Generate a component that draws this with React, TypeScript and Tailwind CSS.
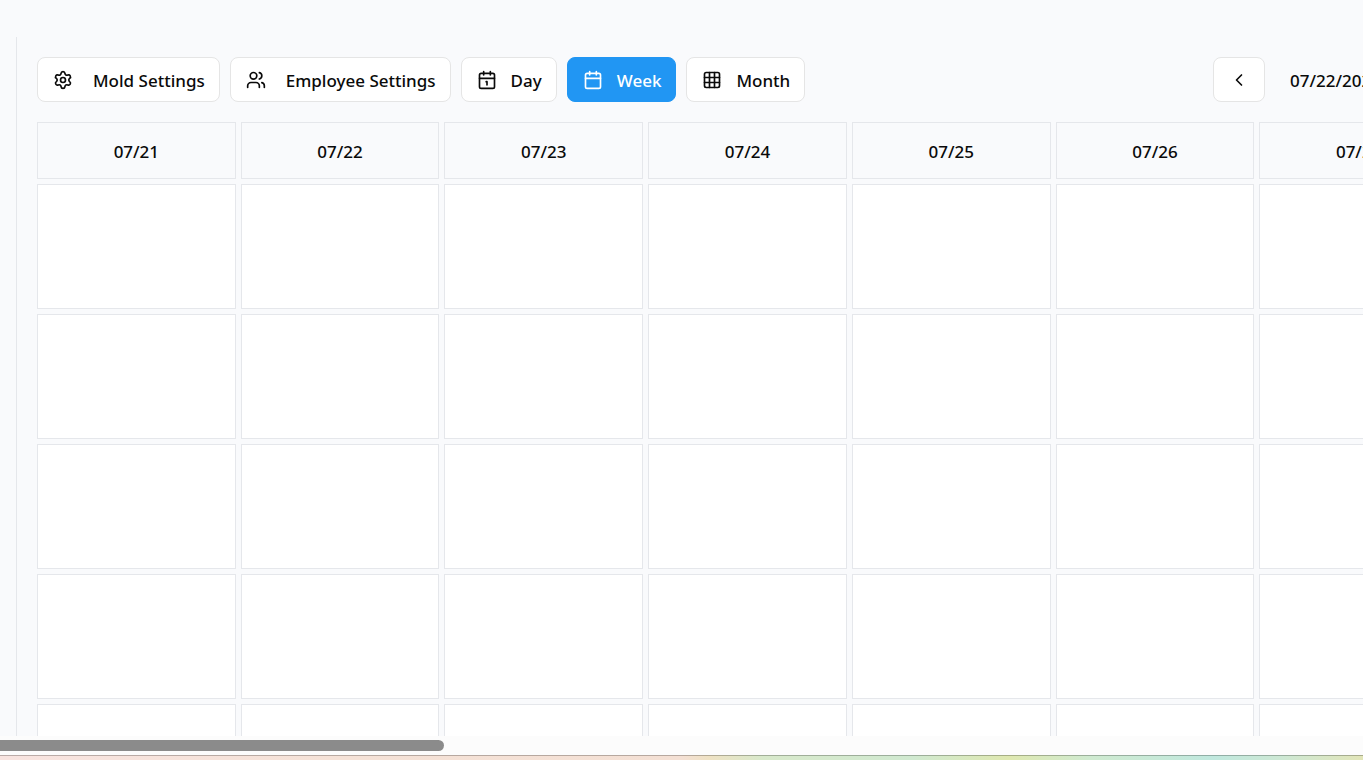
import { useState } from "react";
import type { ReactNode } from "react";
import { Calendar, Calendar1, ChevronLeft, ChevronRight, Grid3x3, Settings, Users } from "lucide-react";
import clsx from "clsx";

const days = ["07/21", "07/22", "07/23", "07/24", "07/25", "07/26", "07/27"];
const rows = [0, 1, 2, 3, 4, 5];

type ToolbarButtonProps = {
  icon: ReactNode;
  label: string;
  wide?: boolean;
  active?: boolean;
  onClick?: () => void;
};

function ToolbarButton({ icon, label, wide, active, onClick }: ToolbarButtonProps) {
  return (
    <button
      type="button"
      onClick={onClick}
      className={clsx(
        "flex h-[45px] shrink-0 items-center whitespace-nowrap rounded-[8px] border pl-[15px] pr-[14px]",
        wide ? "gap-5" : "gap-[14px]",
        active ? "border-[#2196f3] bg-[#2196f3] text-white" : "border-[#e5e5e5] bg-white text-[#0a0a0a]",
      )}
    >
      {icon}
      <span className="pt-px">{label}</span>
    </button>
  );
}

export default function App() {
  const [view, setView] = useState("Week");

  return (
    <div className="flex h-screen flex-col overflow-hidden bg-[#f9fafc] font-['Noto_Sans','Open_Sans',sans-serif] text-[17px] font-medium leading-[25px] text-[#0a0a0a]">
      <div className="min-h-0 flex-1 overflow-hidden pl-4 pt-[37px]">
        <main className="w-max border-l border-[#e5e7eb] p-5">
          <header className="flex items-center justify-between pb-5">
            <div className="flex gap-[10px]">
              <ToolbarButton wide icon={<Settings size={20} />} label="Mold Settings" />
              <ToolbarButton wide icon={<Users size={20} />} label="Employee Settings" />
              <ToolbarButton icon={<Calendar1 size={20} />} label="Day" active={view === "Day"} onClick={() => setView("Day")} />
              <ToolbarButton icon={<Calendar size={20} />} label="Week" active={view === "Week"} onClick={() => setView("Week")} />
              <ToolbarButton icon={<Grid3x3 size={20} />} label="Month" active={view === "Month"} onClick={() => setView("Month")} />
            </div>
            <div className="flex items-center gap-[25px]">
              <button type="button" aria-label="Previous week" className="flex h-[45px] w-[52px] items-center justify-center rounded-[8px] border border-[#e5e5e5] bg-white">
                <ChevronLeft size={20} />
              </button>
              <span className="pt-px">07/22/2025</span>
              <button type="button" aria-label="Next week" className="flex h-[45px] w-[52px] items-center justify-center rounded-[8px] border border-[#e5e5e5] bg-white">
                <ChevronRight size={20} />
              </button>
            </div>
          </header>
          <div className="grid min-w-[1421px] grid-cols-7 gap-[5px]">
            {days.map((day) => (
              <div key={day} className="flex h-[57px] items-center justify-center border border-[#e5e7eb] pt-px">
                {day}
              </div>
            ))}
            {rows.map((row) =>
              days.map((day) => <div key={`${day}-${row}`} className="h-[125px] border border-[#e5e7eb] bg-white" />),
            )}
          </div>
        </main>
      </div>
      <div className="flex h-[19px] shrink-0 items-center bg-[#fcfcfc]">
        <div className="h-[11px] w-[444px] rounded-r-full bg-[#8b8b8b]" />
      </div>
      <div className="h-[5px] shrink-0 border-t border-black/25 bg-[linear-gradient(90deg,#f8e4e0_0%,#f5e2d7_25%,#f4e0d4_50%,#efe2c4_52%,#d8e9cb_56%,#d0e9d0_67%,#dfe8b0_74%,#cfead0_80%,#c0e8de_89%,#cde8d4_94%,#e2e5b8_100%)]" />
    </div>
  );
}
